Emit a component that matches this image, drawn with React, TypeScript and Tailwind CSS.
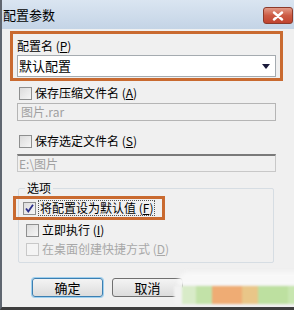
import React from "react";

const font = { fontFamily: '"Noto Sans CJK SC", "Noto Sans", sans-serif' };

function Box({ checked = false, disabled = false }: { checked?: boolean; disabled?: boolean }) {
  return (
    <div
      className={
        "w-[13px] h-[13px] shrink-0 border flex items-center justify-center " +
        (disabled
          ? "border-[#c8c8c8] bg-[#f4f4f4]"
          : "border-[#8e8f8f] bg-gradient-to-br from-[#dcdcdc] to-[#f6f6f6]")
      }
    >
      {checked && (
        <svg width="11" height="11" viewBox="0 0 11 11">
          <path d="M2 5.5 L4.3 8.5 L9 1.8" fill="none" stroke="#2c2f8a" strokeWidth="1.8" />
        </svg>
      )}
    </div>
  );
}

export default function App() {
  return (
    <div
      className="relative w-[294px] h-[310px] overflow-hidden bg-[#f0f0f0] border-l-2 border-[#5f6670] border-b-[3px] border-b-[#3e3e3e] text-[12px] leading-[16px] text-black"
      style={font}
    >
      {/* title bar */}
      <div className="h-[29px] flex items-start justify-between bg-gradient-to-b from-[#dae5f1] to-[#c4d4e6] pl-[1px] pr-[1px]">
        <span className="text-[13px] leading-[18px] mt-[6px] text-black">配置参数</span>
        <div className="mt-[7px] w-[30px] h-[17px] rounded-[3px] border border-[#8c3a2a] bg-gradient-to-b from-[#e29a88] via-[#cc5b44] to-[#c0432f] flex items-center justify-center">
          <svg width="12" height="10" viewBox="0 0 12 10">
            <path d="M2 1.5 L10 8.5 M10 1.5 L2 8.5" stroke="#ffffff" strokeWidth="2.4" strokeLinecap="round" />
          </svg>
        </div>
      </div>

      <div className="pl-[8px] flex flex-col">
        {/* orange box 1 */}
        <div className="mt-[2px] w-[273px] h-[50px] border-[3px] border-[#c96a30] pl-[4px] pt-[4px] flex flex-col">
          <span className="leading-[16px]">配置名 (<span className="underline">P</span>)</span>
          <div className="mt-[1px] w-[259px] h-[22px] bg-white border border-[#a5abb0] flex items-center justify-between pl-[1px] pr-[5px]">
            <span className="text-[13px] leading-[16px]">默认配置</span>
            <svg width="8" height="5" viewBox="0 0 8 5">
              <path d="M0 0 H8 L4 5 Z" fill="#1a1a3a" />
            </svg>
          </div>
        </div>

        {/* save compressed */}
        <div className="mt-[4px] h-[16px] flex items-center gap-[3px] pl-[9px]">
          <Box />
          <span>保存压缩文件名 (<span className="underline">A</span>)</span>
        </div>
        <div className="mt-[2px] ml-[7px] w-[259px] h-[18px] border border-[#b5b5b5] bg-[#f0f0f0] flex items-center pl-[3px] text-[#a0a0a0]">
          图片.rar
        </div>

        {/* save selected */}
        <div className="mt-[12px] h-[16px] flex items-center gap-[3px] pl-[9px]">
          <Box />
          <span>保存选定文件名 (<span className="underline">S</span>)</span>
        </div>
        <div className="mt-[5px] ml-[7px] w-[259px] h-[18px] border border-[#c8c8c8] border-t-[#7a7a7a] border-t-2 bg-[#f0f0f0] flex items-center pl-[1px] text-[#a0a0a0]">
          E:\图片
        </div>

        {/* options group */}
        <div className="relative mt-[16px] ml-[8px] w-[256px] border border-[#d6dde3] rounded-[2px] pb-[5px]">
          <span className="absolute -top-[9px] left-[6px] bg-[#f0f0f0] px-[2px] leading-[16px]">选项</span>
          <div className="mt-[7px] -ml-[6px] w-[152px] h-[24px] border-[3px] border-[#c96a30] flex items-center pl-[7px] gap-[2px]">
            <Box checked />
            <span className="border border-dotted border-[#555] leading-[14px] px-[1px]">
              将配置设为默认值 (<span className="underline">F</span>)
            </span>
          </div>
          <div className="mt-[2px] h-[16px] flex items-center gap-[3px] pl-[7px]">
            <Box />
            <span>立即执行 (<span className="underline">I</span>)</span>
          </div>
          <div className="mt-[3px] h-[16px] flex items-center gap-[3px] pl-[7px] text-[#a8a8a8]">
            <Box disabled />
            <span>在桌面创建快捷方式 (<span className="underline">D</span>)</span>
          </div>
        </div>

        {/* buttons */}
        <div className="mt-[15px] ml-[22px] flex gap-[9px]">
          <div className="w-[71px] h-[19px] rounded-[3px] border border-[#3c7fb1] shadow-[0_0_0_1px_#9fd0ef] bg-gradient-to-b from-[#f4f4f4] to-[#dcdcdc] flex items-center justify-center text-[13px]">
            确定
          </div>
          <div className="w-[71px] h-[19px] rounded-[3px] border border-[#707070] bg-gradient-to-b from-[#f4f4f4] to-[#dcdcdc] flex items-center justify-center text-[13px]">
            取消
          </div>
        </div>
      </div>

      {/* watermark blur */}
      <div className="absolute left-[172px] top-[272px] w-[130px] h-[40px] flex flex-col">
        <div className="h-[14px] ml-[4px] bg-[#f8f8f8] rounded-tl-[10px] blur-[2px]" />
        <div className="h-[18px] flex blur-[1px]">
          <div className="w-[8px] bg-[#f2f2f2]" />
          <div className="w-[14px] bg-[#d8ebc8]" />
          <div className="w-[16px] bg-[#c2e2a8]" />
          <div className="w-[30px] bg-[#efac74]" />
          <div className="w-[16px] bg-[#e9c688]" />
          <div className="w-[30px] bg-[#bde0a0]" />
          <div className="w-[16px] bg-[#c8e6b0]" />
        </div>
      </div>
    </div>
  );
}
